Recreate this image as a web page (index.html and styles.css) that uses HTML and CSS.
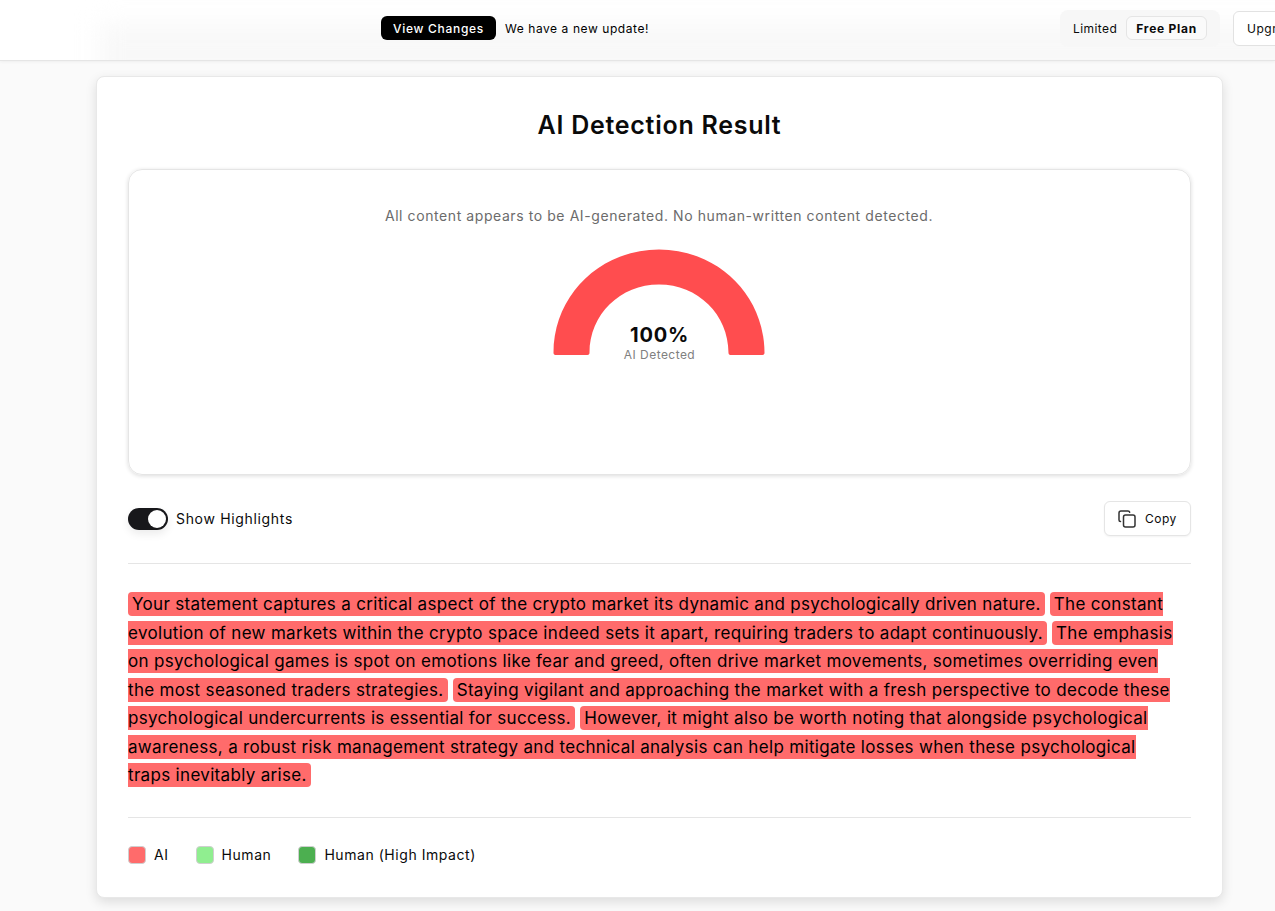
FILE: index.html
```html
<!DOCTYPE html>
<html lang="en">
<head>
<meta charset="utf-8">
<title>AI Detection Result</title>
<link rel="stylesheet" href="styles.css">
</head>
<body>
<header class="topbar">
  <div class="topbar-glow"></div>
  <div class="notice">
    <button class="btn-dark">View Changes</button>
    <span class="notice-text">We have a new update!</span>
  </div>
  <div class="plan">
    <span class="plan-label">Limited</span>
    <span class="plan-chip">Free Plan</span>
  </div>
  <button class="btn-upgrade">Upgrade</button>
</header>
<main class="main">
  <section class="card">
    <h1 class="title">AI Detection Result</h1>
    <div class="panel">
      <p class="panel-text">All content appears to be AI-generated. No human-written content detected.</p>
      <div class="gauge">
        <svg class="gauge-svg" width="212" height="107" viewBox="0 0 212 107">
          <path d="M2.500 106C1.400 106 .5 105.100 .5 104C.5 45.700 47.700 .5 106 .5C164.300 .5 211.500 45.700 211.500 104C211.500 105.100 210.600 106 209.500 106H177.500C176.400 106 175.500 105.100 175.500 104C175.500 65.400 144.600 35.500 106 35.500C67.400 35.500 36.500 65.400 36.500 104C36.500 105.100 35.600 106 34.500 106Z" fill="#ff4d4f"/>
        </svg>
        <div class="gauge-value">100%</div>
        <div class="gauge-label">AI Detected</div>
      </div>
    </div>
    <div class="controls">
      <label class="toggle-wrap">
        <span class="toggle"><span class="knob"></span></span>
        <span class="toggle-text">Show Highlights</span>
      </label>
      <button class="btn-copy">
        <svg width="18" height="18" viewBox="0 0 18 18" fill="none" stroke="#333" stroke-width="1.500" stroke-linejoin="round" stroke-linecap="round">
          <rect x="5.500" y="5" width="11.500" height="12" rx="2"/>
          <path d="M2.500 11.500C1.500 11.500 1 10.800 1 10V3C1 1.900 1.900 1 3 1H10C10.900 1 11.500 1.500 11.700 2.300"/>
        </svg>
        <span>Copy</span>
      </button>
    </div>
    <hr class="rule">
    <p class="result"><span class="hl">Your statement captures a critical aspect of the crypto market its dynamic and psychologically driven nature.</span> <span class="hl">The constant evolution of new markets within the crypto space indeed sets it apart, requiring traders to adapt continuously.</span> <span class="hl">The emphasis on psychological games is spot on emotions like fear and greed, often drive market movements, sometimes overriding even the most seasoned traders strategies.</span> <span class="hl">Staying vigilant and approaching the market with a fresh perspective to decode these psychological undercurrents is essential for success.</span> <span class="hl">However, it might also be worth noting that alongside psychological awareness, a robust risk management strategy and technical analysis can help mitigate losses when these psychological traps inevitably arise.</span></p>
    <hr class="rule">
    <ul class="legend">
      <li class="legend-item"><span class="swatch swatch-ai"></span>AI</li>
      <li class="legend-item"><span class="swatch swatch-human"></span>Human</li>
      <li class="legend-item"><span class="swatch swatch-high"></span>Human (High Impact)</li>
    </ul>
  </section>
</main>
</body>
</html>
```
FILE: styles.css
```css
* { box-sizing: border-box; }
html, body { margin: 0; padding: 0; height: 911px; overflow: hidden; }
body { font-family: Inter, "Liberation Sans", sans-serif; background: #fafafa; color: #0a0a0a; width: 1275px; }
button { font-family: inherit; cursor: pointer; }

.topbar { position: relative; overflow: hidden; height: 61px; background: #fff; border-bottom: 1px solid #e5e5e5; box-shadow: 0 1px 3px rgba(0,0,0,.05); display: flex; align-items: center; padding: 0 0 4px 381px; }
.topbar-glow { position: absolute; left: 100px; right: -40px; top: 24px; height: 60px; background: #f8f8f8; filter: blur(12px); pointer-events: none; }
.notice { position: relative; display: flex; align-items: center; gap: 9px; }
.btn-dark { height: 24px; padding: 0 12px; border: 0; border-radius: 6px; background: #000; color: #fff; font-size: 12px; font-weight: 500; letter-spacing: .7px; }
.notice-text { font-size: 12px; font-weight: 400; color: #000; letter-spacing: .57px; }
.plan { position: relative; margin-left: auto; margin-right: 13px; display: flex; align-items: center; gap: 9px; height: 37px; padding: 0 13px; background: #f7f7f7; border-radius: 8px; font-size: 12px; letter-spacing: .43px; }
.plan-chip { height: 24px; padding: 0 9px; display: flex; align-items: center; background: #fafafa; border: 1px solid #e5e5e5; border-radius: 6px; font-weight: 700; letter-spacing: .75px; }
.btn-upgrade { position: relative; flex: none; width: 90px; margin-right: -48px; height: 35px; padding: 0 0 0 13px; text-align: left; background: #fff; border: 1px solid #e2e2e2; border-radius: 6px; font-size: 12px; color: #0a0a0a; letter-spacing: .5px; }

.main { padding: 15px 0 0 96px; }
.card { width: 1127px; height: 822px; background: #fff; border: 1px solid #e8e8e8; border-radius: 8px; box-shadow: 0 4px 12px rgba(0,0,0,.12); padding: 0 31px; }
.title { margin: 31px 0 27px; height: 34px; line-height: 34px; text-align: center; font-size: 25px; font-weight: 600; color: #0a0a0a; letter-spacing: .73px; }
.panel { height: 306px; border: 1px solid #e5e5e5; border-radius: 14px; box-shadow: 0 1px 4px rgba(0,0,0,.14); padding: 36px 1px 0 0; display: flex; flex-direction: column; align-items: center; }
.panel-text { margin: 0; font-size: 14px; line-height: 20px; color: #6b6b6b; letter-spacing: .58px; }
.gauge { position: relative; width: 212px; height: 120px; margin-top: 23px; }
.gauge-svg { display: block; }
.gauge-value { position: absolute; left: 1px; right: 0; top: 73px; text-align: center; font-size: 20px; line-height: 26px; font-weight: 700; color: #0a0a0a; letter-spacing: .75px; }
.gauge-label { position: absolute; left: 1px; right: 0; top: 98px; text-align: center; font-size: 12px; line-height: 16px; color: #808080; letter-spacing: .45px; }
.controls { display: flex; justify-content: space-between; align-items: center; margin-top: 26px; height: 35px; }
.toggle-wrap { display: flex; align-items: center; gap: 8px; font-size: 14px; letter-spacing: .67px; }
.toggle { display: block; position: relative; width: 40px; height: 22px; border-radius: 11px; background: #18181b; box-shadow: 0 4px 8px rgba(0,0,0,.08); }
.knob { position: absolute; right: 2px; top: 2px; width: 18px; height: 18px; border-radius: 50%; background: #fff; }
.btn-copy { display: flex; align-items: center; gap: 9px; width: 87px; height: 35px; padding: 0 0 0 13px; background: #fff; border: 1px solid #e5e5e5; border-radius: 6px; font-size: 12px; color: #0a0a0a; letter-spacing: .5px; box-shadow: 0 1px 2px rgba(0,0,0,.05); }
.rule { border: 0; border-top: 1px solid #e5e5e5; margin: 0; }
.controls + .rule { margin-top: 27px; }
.result { margin: 26px 0 27px; padding-right: 10px; font-size: 17px; line-height: 28.500px; color: #000; letter-spacing: .32px; }
.hl { background: #ff6b6b; border-radius: 4px; padding: 2px 4px; }
.legend { list-style: none; margin: 27px 0 0; padding: 0; display: flex; gap: 27px; font-size: 14px; color: #0a0a0a; letter-spacing: .55px; }
.legend-item { display: flex; align-items: center; gap: 8px; height: 20px; }
.swatch { width: 18px; height: 18px; border-radius: 4px; border: 1px solid #cfcfcf; }
.swatch-ai { background: #ff6b6b; }
.swatch-human { background: #90ee90; }
.swatch-high { background: #4caf50; }
```
